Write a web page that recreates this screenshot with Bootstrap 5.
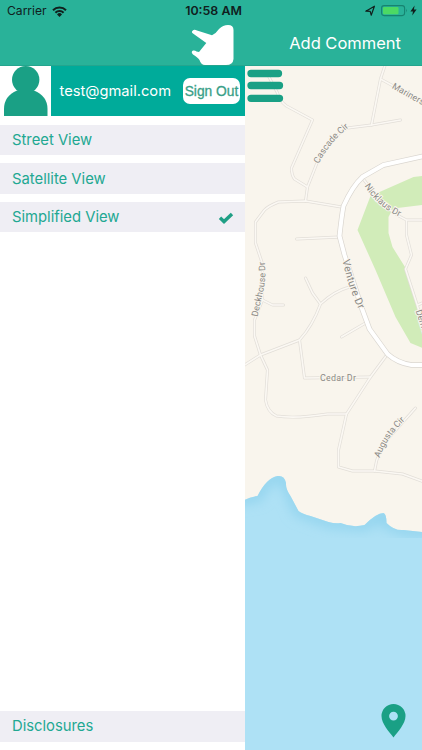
<!DOCTYPE html>
<html lang="en">
<head>
  <meta charset="utf-8">
  <meta name="viewport" content="width=device-width, initial-scale=1">
  <title>Add Comment</title>
  <link href="https://cdn.jsdelivr.net/npm/bootstrap@5.3.3/dist/css/bootstrap.min.css" rel="stylesheet">
  <style>
    body { font-family: Inter, "Liberation Sans", sans-serif; overflow: hidden; }
    .top-bar { height: 66px; background: #29b299; border-bottom: 1px solid #24a58e; }
    .status-row { height: 22px; font-size: 12.1px; line-height: 1; color: #10201d; }
    .status-side { flex: 1 1 0; }
    .carrier { padding-left: 7px; gap: 5px; }
    .clock { font-weight: 600; font-size: 12.4px; margin-right: 2px; }
    .title-row { height: 43px; padding-left: 191px; padding-right: 21px; }
    .title-text { font-size: 16.5px; line-height: 43px; }
    .side-menu { width: 244.5px; }
    .profile { height: 50px; }
    .profile-info { background: #00ab9a; padding-left: 8.5px; padding-right: 4.5px; margin-left: 3px; }
    .email { font-size: 14.7px; line-height: 1; padding-top: 1px; }
    .btn-signout { width: 57px; height: 26px; border-radius: 7px; font: 13.8px "Liberation Sans", sans-serif; color: #3a9f88; -webkit-text-stroke: .3px #3a9f88; }
    .menu-items { margin-top: 8.8px; gap: 8.4px; }
    .menu-item { height: 30.3px; padding: 1px 11px 0 12px; background: #efeef4; color: #22a892; font-size: 14.8px; line-height: 1; }
    .menu-bottom { margin-bottom: 8.5px; }
    .map-area { background: #f9f5ed; }
    .road-label { font: 9px Roboto, sans-serif; fill: #8b8985; stroke: #f9f5ed; stroke-width: 2px; paint-order: stroke; }
    .road-label-big { font-size: 10.5px; }
  </style>
</head>

<body class="vh-100 d-flex flex-column">
  <header class="top-bar flex-shrink-0">
    <div class="status-row d-flex align-items-center">
      <div class="status-side carrier d-flex align-items-center">
        <span>Carrier</span>
        <svg width="15" height="11" viewBox="0 0 15 11" fill="none" stroke="#10201d" stroke-width="2">
          <path d="M1 4.2a9.2 9.2 0 0 1 13 0M3.4 6.7a5.8 5.8 0 0 1 8.2 0"/>
          <path d="M5 8.4a3.5 3.5 0 0 1 5 0L7.5 11z" fill="#10201d" stroke="none"/>
        </svg>
      </div>
      <span class="clock">10:58 AM</span>
      <div class="status-side d-flex align-items-center justify-content-end">
        <svg width="57" height="16" viewBox="365 3 57 16">
          <path d="M365.8 11.2L374.4 6.2L371.2 15.2L370.2 11.3Z" fill="none" stroke="#10201d" stroke-width="1.2" stroke-linejoin="round"/>
          <rect x="381.6" y="5.6" width="23" height="10" rx="2.5" fill="none" stroke="#178370" stroke-width="1.1"/>
          <rect x="383" y="7" width="15.5" height="7.2" rx="1" fill="#4cd964"/>
          <path d="M406 8.8q1.6 1.8 0 3.6z" fill="#178370"/>
          <path d="M414.6 5.6L410.4 11.4H413L412.2 15.6L416.6 9.6H413.9Z" fill="#10201d"/>
        </svg>
      </div>
    </div>
    <div class="title-row d-flex justify-content-between">
      <!-- hand logo -->
      <svg width="44" height="43" viewBox="191 22 44 43">
        <path d="M193.500 30Q195 29.500 197 30.500L212 35.200Q216 33.500 219 29Q223 25 228 25Q233.500 25 233.500 30V59Q233 65 226 65H205Q201 65 199.500 60Q198 57.500 193 54.500Q190.500 52 193 50.500Q195 50 196.500 51.500L199 52L206.300 43L193 33.500Q190.500 32 193.500 30Z" fill="#fff"/>
      </svg>
      <span class="title-text text-white">Add Comment</span>
    </div>
  </header>

  <main class="d-flex flex-grow-1 overflow-hidden">
    <nav class="side-menu bg-white d-flex flex-column flex-shrink-0">
      <div class="profile d-flex">
        <svg class="flex-shrink-0" width="48" height="50" viewBox="0 66 48 50">
          <g fill="#1aa085">
            <circle cx="25.700" cy="79.800" r="13.700"/>
            <path d="M4 116V109Q4 96 17 90.500H34Q47.500 96 47.500 109V116Z"/>
          </g>
        </svg>
        <div class="profile-info d-flex flex-grow-1 align-items-center justify-content-between">
          <span class="email text-white">test@gmail.com</span>
          <button class="btn-signout border-0 bg-white p-0 text-nowrap">Sign Out</button>
        </div>
      </div>
      <div class="menu-items d-flex flex-column">
        <div class="menu-item d-flex align-items-center">Street View</div>
        <div class="menu-item d-flex align-items-center">Satellite View</div>
        <div class="menu-item d-flex align-items-center justify-content-between">
          Simplified View
          <svg width="16" height="12" viewBox="0 0 16 12"><path d="M2 5.800L6 9.600L14 2" fill="none" stroke="#1f9f85" stroke-width="3.400"/></svg>
        </div>
      </div>
      <div class="menu-item menu-bottom d-flex align-items-center mt-auto">Disclosures</div>
    </nav>

    <section class="map-area flex-grow-1">
      <svg class="d-block w-100 h-100" viewBox="244.5 66 177.5 684" preserveAspectRatio="xMinYMin slice">
        <defs>
          <g id="roads" fill="none" stroke-linejoin="round" stroke-linecap="round">
            <path d="M268 76L277 93Q279 101 286 106L312 120L291 168Q291 175 294 179L307 187"/>
            <path d="M400 120L371 125L347 128Q331 137 320 154L307 187L305 201"/>
            <path d="M385 64L380 79L371 125M380 79L422 102"/>
            <path d="M341 207L305 201L278 202Q268 206 264 210L255 222V243L262 264V300L254 320V336L260 355L267 370L265 400Q267 412 276 416Q295 419 327 414H346"/>
            <path d="M262 300L272 305H283M244 365L260 355L299 340Q312 326 320 304L312 293L305 278M320 304Q334 291 349 287"/>
            <path d="M299 340L304 378L370 377M341 337L365 323M296 239L339 237"/>
            <path d="M387 354L370 377L346 414L338 450V467L352 471H374L402 474L424 482"/>
            <path d="M374 471Q377 449 390 436L415 408"/>
            <path d="M362 178L380 201Q391 213 406 220H422M406 220V235L411 255L405 269L417 306L424 330M417 305L424 302"/>
          </g>
          <path id="venture" d="M424 156L383 165L362 177Q352 186 343 206Q341 217 339 236L344 255L362 310L369 329L387 354Q397 363 411 365H424"/>
          <path id="water" d="M244 500Q249 497 257 496Q266 478 277 476Q284 475 285.500 483Q285 489 290 496L298 511Q302 514 310 516L328 522Q335 524 340 523Q352 528 364 525Q376 513 383 513Q386 514 386 523Q394 531 403 530L422 532V750H244Z"/>
          <clipPath id="water-clip"><use href="#water"/></clipPath>
          <filter id="soft"><feGaussianBlur stdDeviation="6"/></filter>
          <path id="t-mariners" d="M391 88L432 111"/>
          <path id="t-cascade" d="M318 164Q330 141 350 126"/>
          <path id="t-nicklaus" d="M364 186Q378 208 402 218"/>
          <path id="t-deck" d="M257 317L263 290Q266 276 264 261"/>
          <path id="t-venture" d="M342 260Q348 289 359 311"/>
          <path id="t-dema" d="M415 311L425 340"/>
          <path id="t-augusta" d="M379 458Q387 436 406 419"/>
        </defs>
        <path d="M422 176L413 177L370 196L357 230L375 270L395 317L410 343L422 348V324L404.500 267L392 247L388 233V217Q391 210 397 208L422 205Z" fill="#d1ecb9"/>
        <use href="#roads" stroke="#e2ded8" stroke-width="3"/>
        <use href="#roads" stroke="#fbf8f3" stroke-width="1.600"/>
        <use href="#venture" fill="none" stroke="#dad6d0" stroke-width="5.400"/>
        <use href="#venture" fill="none" stroke="#fff" stroke-width="4"/>
        <!-- water, a little darker along the shore -->
        <use href="#water" fill="#aee1f5"/>
        <g clip-path="url(#water-clip)">
          <path d="M234 500L257 496Q266 478 277 476Q284 475 285.500 483L298 511L328 522L364 525L383 513L386 523L403 530L432 532" fill="none" stroke="#93d4ee" stroke-width="11" filter="url(#soft)"/>
        </g>
        <g class="road-label">
          <text><textPath href="#t-mariners">Mariners Dr</textPath></text>
          <text><textPath href="#t-cascade" textLength="48">Cascade Cir</textPath></text>
          <text><textPath href="#t-nicklaus" textLength="47">Nicklaus Dr</textPath></text>
          <text><textPath href="#t-deck" textLength="56">Deckhouse Dr</textPath></text>
          <text class="road-label-big"><textPath href="#t-venture" textLength="52">Venture Dr</textPath></text>
          <text><textPath href="#t-dema">Demarest</textPath></text>
          <text x="319.500" y="381" textLength="36">Cedar Dr</text>
          <text><textPath href="#t-augusta" textLength="46">Augusta Cir</textPath></text>
        </g>
        <!-- menu button -->
        <g stroke="#1aa085" stroke-width="7.300" stroke-linecap="round"><path d="M250.500 73.500H278M250.500 85.500H279M250.500 98.300H279"/></g>
        <!-- location pin -->
        <path fill-rule="evenodd" d="M393 704A12 12 0 0 0 381 716C381 724 389 732 393 737.500C397 732 405 724 405 716A12 12 0 0 0 393 704ZM393 711.700A4.400 4.400 0 1 1 393 720.500A4.400 4.400 0 1 1 393 711.700Z" fill="#1aa085"/>
      </svg>
    </section>
  </main>

  <script src="https://cdn.jsdelivr.net/npm/bootstrap@5.3.3/dist/js/bootstrap.bundle.min.js"></script>
</body>
</html>
